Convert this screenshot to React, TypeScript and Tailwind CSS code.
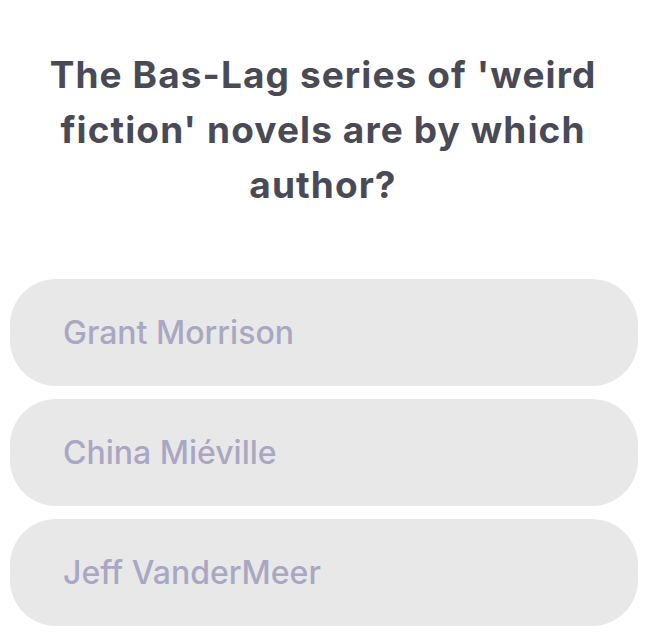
const options = ["Grant Morrison", "China Miéville", "Jeff VanderMeer"];

export default function App() {
  return (
    <div className="min-h-[640px] w-[646px] bg-white font-['Inter',sans-serif]">
      <h1 className="px-9 pt-[47px] text-center text-[37px] font-bold leading-[55px] tracking-[1.1px] text-[#4a4a57]">
        The Bas-Lag series of 'weird fiction' novels are by which author?
      </h1>
      <div className="mt-[67px] flex flex-col gap-[13px] pl-[10px] pr-[8px]">
        {options.map((o) => (
          <button
            key={o}
            className="flex h-[107px] items-center rounded-[46px] bg-[#e8e8e9] pl-[53px] text-left text-[32px] font-medium text-[#a9a7c1]"
          >
            {o}
          </button>
        ))}
      </div>
    </div>
  );
}
